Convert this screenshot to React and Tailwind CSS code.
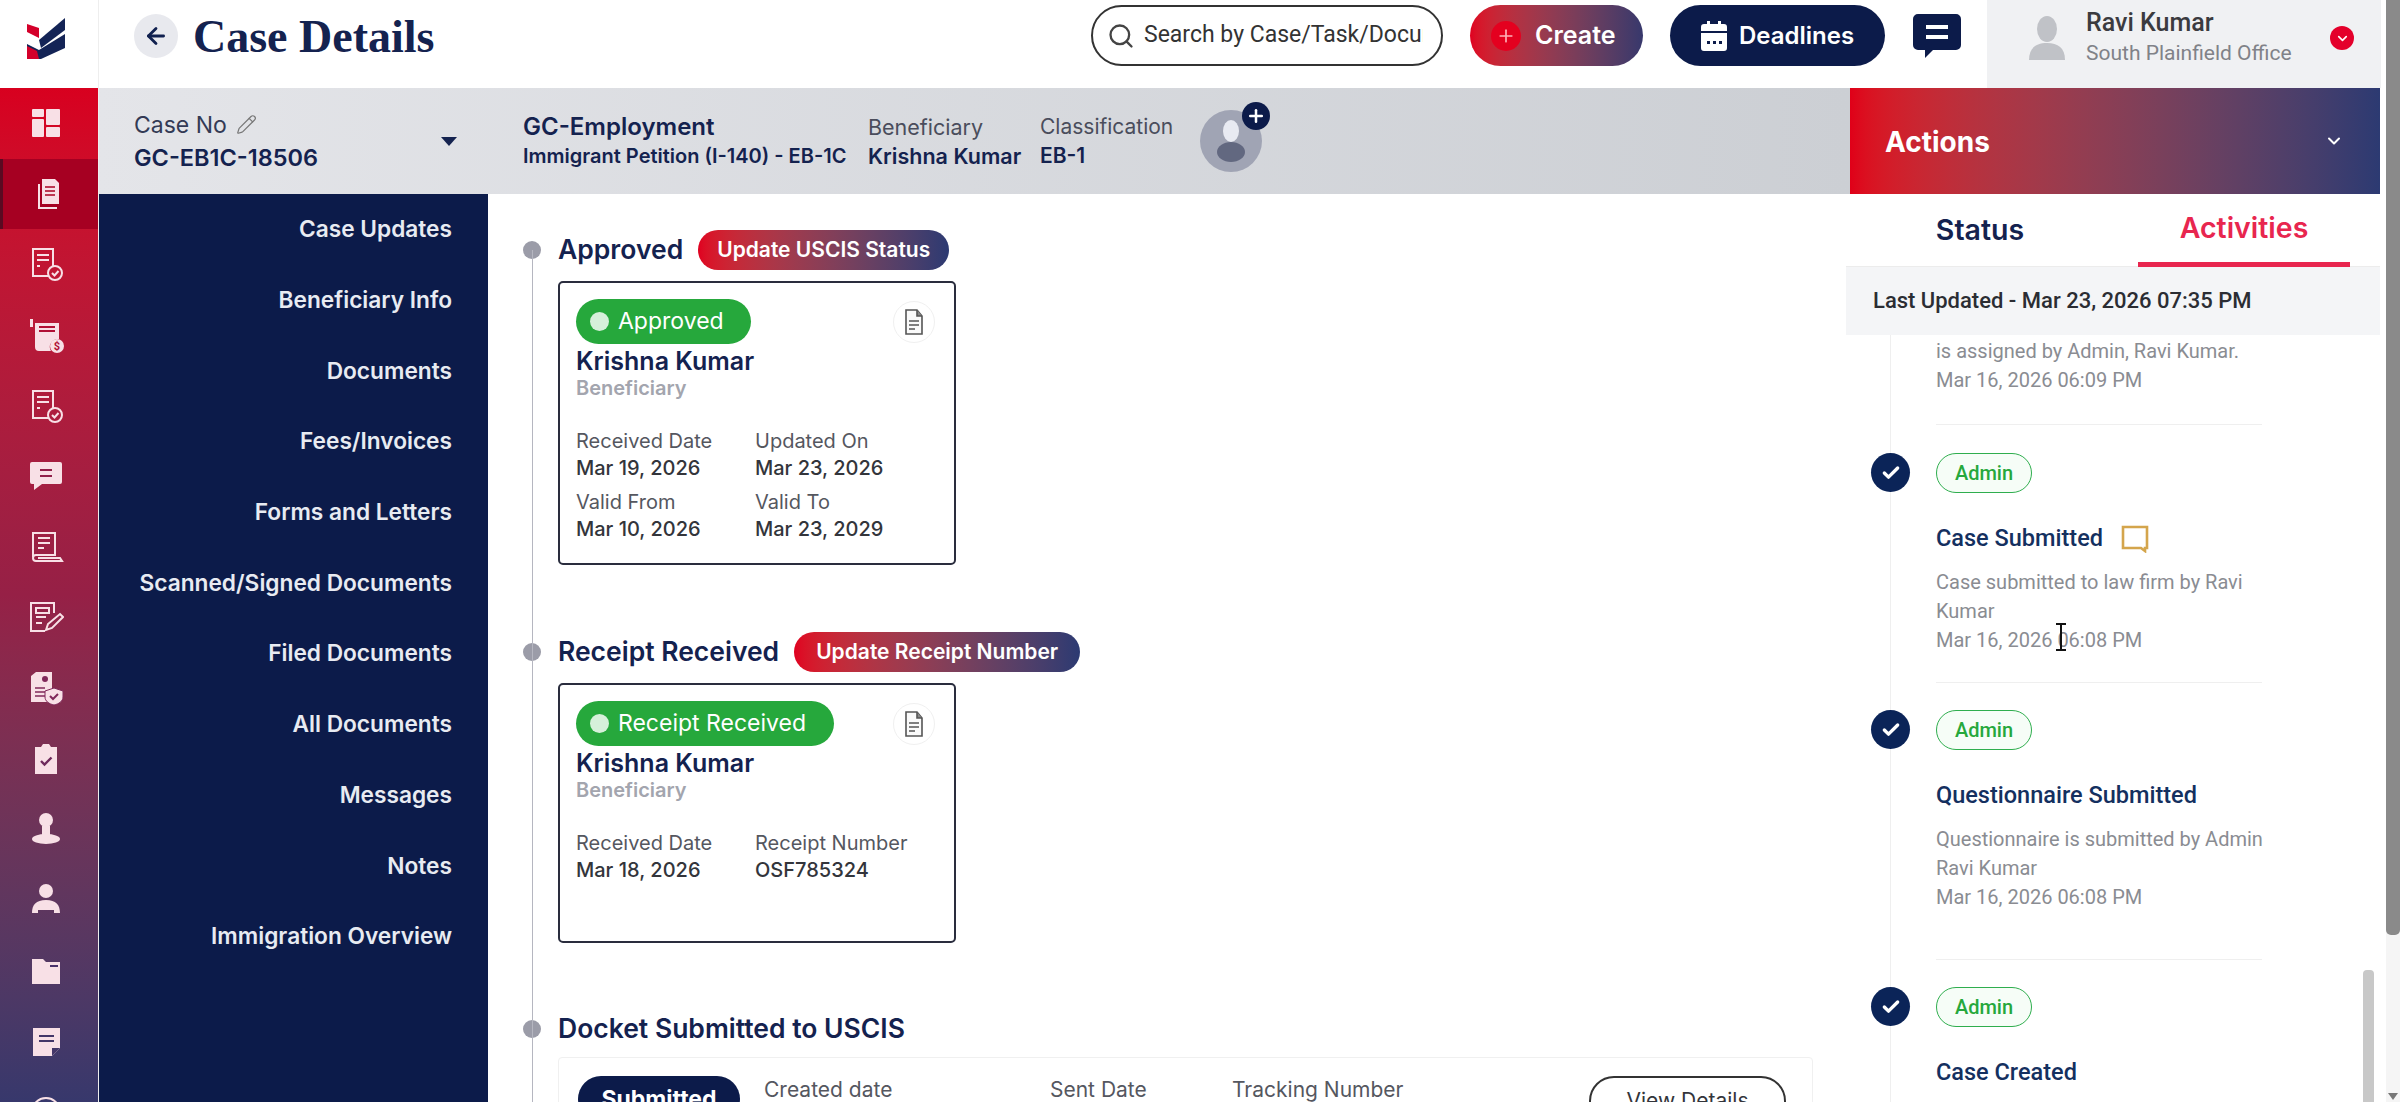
import { ArrowLeft, Search, Plus, ChevronDown, Check, Pencil } from 'lucide-react'

const subNav = ['Case Updates', 'Beneficiary Info', 'Documents', 'Fees/Invoices', 'Forms and Letters', 'Scanned/Signed Documents', 'Filed Documents', 'All Documents', 'Messages', 'Notes', 'Immigration Overview']

function Logo() {
  return (
    <svg width="40" height="42" viewBox="0 0 40 42">
      <path d="M0 14 L12 20 L12 10 L0 6Z" fill="#d4002a" />
      <path d="M12 22 L38 0 V12 L14 30Z" fill="#142456" />
      <path d="M0 26 L12 32 L38 16 V30 L14 41 H0Z" fill="#142456" />
      <path d="M0 28 L10 33 L12 41 H0Z" fill="#d4002a" />
    </svg>
  )
}

// rail glyphs, all on a 36 box
const glyphs = [
  <g fill="currentColor"><rect x="4" y="4" width="12" height="8" rx="1" /><rect x="4" y="14" width="12" height="18" rx="1" /><rect x="18" y="4" width="14" height="16" rx="1" /><rect x="18" y="22" width="14" height="10" rx="1" /></g>,
  <g><path d="M11 3h13l4 4v21H11z" fill="currentColor" /><path d="M8 8v24h18" fill="none" stroke="currentColor" strokeWidth="2" /><path d="M14 11h10M14 15h10M14 19h10" stroke="#a80022" strokeWidth="1.6" /></g>,
  <g fill="none" stroke="currentColor" strokeWidth="2"><path d="M21 30H5V3h20v17" /><path d="M9 9h12M9 14h12M9 20h3" /><circle cx="27" cy="27" r="7" /><path d="M24 27l2.5 2.5 4-4.5" /></g>,
  <g><path d="M7 6h24v16a8 8 0 0 0-8 12H11a4 4 0 0 1-4-4z" fill="currentColor" /><path d="M2 2h3v8H2z" fill="currentColor" /><path d="M11 10h16M11 14h16" stroke="#b01035" strokeWidth="2" /><circle cx="29" cy="29" r="7" fill="currentColor" /><text x="29" y="33" fontSize="11" fontWeight="700" textAnchor="middle" fill="#b01035" fontFamily="Roboto, sans-serif">$</text></g>,
  <g fill="none" stroke="currentColor" strokeWidth="2"><path d="M21 30H5V3h20v17" /><path d="M9 9h12M9 14h12M9 20h3" /><circle cx="27" cy="27" r="7" /><path d="M24 27l2.5 2.5 4-4.5" /></g>,
  <g><path d="M4 4h28a2 2 0 0 1 2 2v18a2 2 0 0 1-2 2H14l-8 6v-6H4a2 2 0 0 1-2-2V6a2 2 0 0 1 2-2z" fill="currentColor" /><path d="M12 12h12M12 18h12" stroke="#90204a" strokeWidth="2" /></g>,
  <g fill="none" stroke="currentColor" strokeWidth="2"><path d="M5 28V4h22v22H8a3 3 0 0 0-3 3 3 3 0 0 0 3 3h26l-2-3H10" /><path d="M10 9h12M10 14h12M10 19h6" /></g>,
  <g fill="none" stroke="currentColor" strokeWidth="2"><path d="M26 14V4H3v28h14" /><path d="M8 9h13v5H8zM8 18h10M8 24h6" /><path d="M18 31l2-6 12-10 3 3-11 11z" /></g>,
  <g><path d="M3 6l5-4h16v18a8 8 0 0 0-3 12H3z" fill="currentColor" /><path d="M7 18h10M7 22h10M7 26h10" stroke="#80285a" strokeWidth="1.6" /><circle cx="17" cy="9" r="3" fill="#80285a" /><path d="M26 18l9 3v6c0 4-4 7-9 8-5-1-9-4-9-8v-6z" fill="currentColor" stroke="#80285a" /><path d="M22 26l3 3 5-5" fill="none" stroke="#80285a" strokeWidth="2" /></g>,
  <g><path d="M7 6h6l2-3h6l2 3h6v27H7z" fill="currentColor" /><path d="M13 20l3.5 3.5 7-7" fill="none" stroke="#6e2a5c" strokeWidth="2.4" /></g>,
  <g fill="currentColor"><circle cx="18" cy="9" r="7" /><rect x="14" y="15" width="8" height="9" /><ellipse cx="18" cy="28" rx="14" ry="5" /></g>,
  <g fill="currentColor"><circle cx="18" cy="9" r="7" /><path d="M4 31c0-8 4-13 14-13s14 5 14 13h-6v-3h-16v3z" /></g>,
  <g><path d="M4 7h11l3 3h14v22H4z" fill="currentColor" /><path d="M22 14h8" stroke="#4a326a" strokeWidth="2" /></g>,
  <g><path d="M5 5h27v20l-8 8H5z" fill="currentColor" /><path d="M11 13h15M11 18h15" stroke="#443668" strokeWidth="2" /><path d="M24 33v-8h8" fill="#443668" /></g>,
  <g fill="none" stroke="currentColor" strokeWidth="2"><circle cx="18" cy="18" r="14" /></g>,
]

function Rail() {
  return (
    <aside className="w-[99px] shrink-0 flex flex-col border-r border-[#eeeeee]">
      <div className="h-[88px] shrink-0 bg-white flex items-center justify-center pb-[10px] pr-[5px]">
        <Logo />
      </div>
      <div className="flex-1 overflow-hidden bg-gradient-to-b from-[#d8001f] via-[#962046] via-50% to-[#37386c] flex flex-col">
        {glyphs.map((g, i) => (
          <div key={i} className={`h-[70.6px] shrink-0 flex items-center justify-center text-[#f8e0e6] ${i === 1 ? 'bg-[#a60022] border-l-[3px] border-[#5a0a22] pr-[3px]' : 'pr-[6px]'}`}>
            <svg width="36" height="36" viewBox="0 0 36 36">{g}</svg>
          </div>
        ))}
      </div>
    </aside>
  )
}

function Header() {
  return (
    <header className="h-[88px] shrink-0 flex items-start bg-white font-['Inter',sans-serif]">
      <button className="mt-[14px] ml-[35px] w-[44px] h-[44px] rounded-full bg-[#e8e9ee] flex items-center justify-center text-[#10204f]">
        <ArrowLeft size={26} strokeWidth={2.6} />
      </button>
      <h1 className="mt-[11px] ml-[15px] font-['Liberation_Serif',serif] font-bold text-[46px] leading-[52px] text-[#14224f]">Case Details</h1>
      <div className="flex-1" />
      <div className="mt-[5px] w-[352px] h-[61px] rounded-full border-2 border-[#333] flex items-center pl-[14px] pr-[18px] gap-[9px] font-['Roboto',sans-serif] text-[23px] text-[#333] overflow-hidden">
        <Search size={28} strokeWidth={2} className="shrink-0 text-[#444]" />
        <span className="whitespace-nowrap overflow-hidden">Search by Case/Task/Document</span>
      </div>
      <button className="mt-[5px] ml-[27px] w-[173px] h-[61px] rounded-full bg-gradient-to-r from-[#e00020] to-[#37386c] flex items-center pl-[21px] gap-[14px] text-white font-semibold text-[25px]">
        <span className="w-[30px] h-[30px] rounded-full bg-[#e4001f] flex items-center justify-center">
          <Plus size={20} strokeWidth={2} className="text-[#ffb0b8]" />
        </span>
        Create
      </button>
      <button className="mt-[5px] ml-[27px] w-[215px] h-[61px] rounded-full bg-[#0c1b4a] flex items-center justify-center gap-[12px] text-white font-semibold text-[24px]">
        <svg width="26" height="30" viewBox="0 0 26 30" fill="#fff">
          <path d="M6 0h3v4H6zM17 0h3v4h-3z" />
          <path d="M3 3h20a3 3 0 0 1 3 3v4H0V6a3 3 0 0 1 3-3zM0 12h26v15a3 3 0 0 1-3 3H3a3 3 0 0 1-3-3z" />
          <path d="M6 20h3v3H6zM12 20h3v3h-3zM18 20h3v3h-3z" fill="#0c1b4a" />
        </svg>
        Deadlines
      </button>
      <svg className="mt-[14px] ml-[28px]" width="48" height="44" viewBox="0 0 48 44">
        <path d="M5 0h38a5 5 0 0 1 5 5v26a5 5 0 0 1-5 5H20l-8 8v-8H5a5 5 0 0 1-5-5V5a5 5 0 0 1 5-5z" fill="#0c1b4a" />
        <path d="M13 13h22M13 23h22" stroke="#fff" strokeWidth="4" />
      </svg>
      <div className="ml-[26px] w-[394px] h-[88px] bg-[#f0f1f3] flex items-center pb-[12px] font-['Roboto',sans-serif]">
        <svg className="ml-[40px]" width="40" height="44" viewBox="0 0 40 44" fill="#c0c2c7">
          <ellipse cx="20" cy="13" rx="10" ry="13" />
          <path d="M2 44c0-12 7-17 18-17s18 5 18 17z" />
        </svg>
        <div className="ml-[19px] flex flex-col">
          <span className="text-[25px] leading-[30px] font-medium text-[#3b3b3f]">Ravi Kumar</span>
          <span className="text-[21px] leading-[30px] text-[#808288]">South Plainfield Office</span>
        </div>
        <span className="ml-auto mr-[27px] w-[24px] h-[24px] rounded-full bg-[#e4002b] flex items-center justify-center text-white">
          <ChevronDown size={15} strokeWidth={2.6} />
        </span>
      </div>
      <div className="w-[19px]" />
    </header>
  )
}

function CaseBand() {
  return (
    <div className="h-[106px] shrink-0 flex font-['Inter',sans-serif]">
      <div className="flex-1 bg-gradient-to-r from-[#e4e5e9] to-[#cccfd4] flex items-center text-[#14224f]">
        <div className="ml-[35px] w-[389px] flex items-center">
          <div className="flex-1">
            <div className="flex items-center gap-[9px] text-[23px] leading-[30px] text-[#333a55]">
              Case No <Pencil size={21} strokeWidth={1.4} className="text-[#777]" />
            </div>
            <div className="mt-[3px] text-[23.5px] leading-[30px] font-semibold">GC-EB1C-18506</div>
          </div>
          <div className="w-0 h-0 border-x-[8px] border-x-transparent border-t-[9px] border-t-[#14224f] mr-[66px]" />
        </div>
        <div className="w-[345px]">
          <div className="text-[24px] leading-[30px] font-semibold">GC-Employment</div>
          <div className="text-[20px] leading-[28px] font-semibold whitespace-nowrap">Immigrant Petition (I-140) - EB-1C</div>
        </div>
        <div className="w-[172px]">
          <div className="text-[21.5px] leading-[30px] text-[#4a4d5c]">Beneficiary</div>
          <div className="text-[21.5px] leading-[28px] font-semibold whitespace-nowrap">Krishna Kumar</div>
        </div>
        <div className="w-[157px]">
          <div className="text-[21px] leading-[30px] text-[#4a4d5c]">Classification</div>
          <div className="text-[21px] leading-[28px] font-semibold">EB-1</div>
        </div>
        <div className="relative ml-[3px] w-[62px] h-[62px] rounded-full bg-[#a0a4b4] flex items-center justify-center">
          <svg width="30" height="42" viewBox="0 0 30 42">
            <ellipse cx="15" cy="11" rx="8" ry="11" fill="#e8eaf2" />
            <ellipse cx="15" cy="32" rx="14" ry="10" fill="#626880" />
          </svg>
          <span className="absolute top-[-8px] right-[-8px] w-[28px] h-[28px] rounded-full bg-[#0c1b4a] flex items-center justify-center text-white">
            <Plus size={20} strokeWidth={3} />
          </span>
        </div>
      </div>
      <div className="w-[530px] bg-gradient-to-r from-[#e00018] to-[#2c3a72] flex items-center pl-[35px] pr-[36px] text-white">
        <span className="font-bold text-[28px] mt-[2px]">Actions</span>
        <ChevronDown size={20} strokeWidth={2.4} className="ml-auto" />
      </div>
      <div className="w-[20px] bg-white" />
    </div>
  )
}

function SubNav() {
  return (
    <nav className="w-[389px] shrink-0 bg-[#0c1b4a] flex flex-col font-['Inter',sans-serif]">
      {subNav.map((item) => (
        <div key={item} className="h-[70.7px] shrink-0 flex items-center justify-end pr-[36px] text-[22.7px] font-semibold text-[#e8ebf2] whitespace-nowrap">
          {item}
        </div>
      ))}
    </nav>
  )
}

function Field({ label, value }) {
  return (
    <div className="w-[179px]">
      <div className="text-[20px] leading-[27px] text-[#55575f] whitespace-nowrap">{label}</div>
      <div className="text-[20px] leading-[27px] font-medium text-[#33353b] whitespace-nowrap">{value}</div>
    </div>
  )
}

function StatusCard({ status, pillWidth, height, rows }) {
  return (
    <div className={`ml-[35px] w-[398px] ${height} border-2 border-[#2a2d3e] rounded-[5px] mt-[11px] px-[16px] pt-[16px]`}>
      <div className="flex items-center justify-between">
        <div className={`${pillWidth} h-[45px] rounded-full bg-[#26a83c] flex items-center pl-[14px] gap-[9px] text-white text-[23px] whitespace-nowrap`}>
          <span className="w-[19px] h-[19px] rounded-full bg-[#d6f0da]" />
          {status}
        </div>
        <div className="mr-[3px] w-[42px] h-[42px] rounded-full border border-[#f0f0f0] flex items-center justify-center">
          <svg width="20" height="26" viewBox="0 0 20 26" fill="none" stroke="#555" strokeWidth="1.6">
            <path d="M2 1h11l5 6v18H2z" fill="#fafafa" />
            <path d="M13 1v6h5" fill="#888" />
            <path d="M5 12h10M5 16h10M5 20h6" />
          </svg>
        </div>
      </div>
      <div className="mt-[1px] text-[25px] leading-[32px] font-semibold text-[#14224f] whitespace-nowrap">Krishna Kumar</div>
      <div className="text-[20px] leading-[22px] font-semibold text-[#a3a5ae]">Beneficiary</div>
      <div className="mt-[29px] flex flex-col gap-[7px]">
        {rows.map((row) => (
          <div key={row[0].label} className="flex">
            <Field {...row[0]} />
            <Field {...row[1]} />
          </div>
        ))}
      </div>
    </div>
  )
}

function StepHead({ title, action, actionWidth }) {
  return (
    <div className="flex items-center h-[40px]">
      <span className="w-[18px] h-[18px] rounded-full bg-[#9b9ca8] mr-[17px] shrink-0" />
      <h2 className="text-[26.5px] font-semibold text-[#14224f] whitespace-nowrap">{title}</h2>
      {action && (
        <button className={`ml-[15px] ${actionWidth} h-[40px] rounded-full bg-gradient-to-r from-[#e00020] to-[#2c3a72] text-white font-semibold text-[21px] whitespace-nowrap`}>
          {action}
        </button>
      )}
    </div>
  )
}

function Content() {
  return (
    <main className="relative flex-1 min-w-0 bg-white overflow-hidden font-['Inter',sans-serif] pl-[35px] pt-[36px]">
      <div className="absolute left-[44px] top-[56px] bottom-0 w-px bg-[#b5b6c0]" />
      <StepHead title="Approved" action="Update USCIS Status" actionWidth="w-[251px]" />
      <StatusCard
        status="Approved"
        pillWidth="w-[175px]"
        height="h-[284px]"
        rows={[
          [{ label: 'Received Date', value: 'Mar 19, 2026' }, { label: 'Updated On', value: 'Mar 23, 2026' }],
          [{ label: 'Valid From', value: 'Mar 10, 2026' }, { label: 'Valid To', value: 'Mar 23, 2029' }],
        ]}
      />
      <div className="h-[67px]" />
      <StepHead title="Receipt Received" action="Update Receipt Number" actionWidth="w-[286px]" />
      <StatusCard
        status="Receipt Received"
        pillWidth="w-[258px]"
        height="h-[260px]"
        rows={[[{ label: 'Received Date', value: 'Mar 18, 2026' }, { label: 'Receipt Number', value: 'OSF785324' }]]}
      />
      <div className="h-[66px]" />
      <StepHead title="Docket Submitted to USCIS" />
      <div className="ml-[35px] mt-[8px] w-[1255px] h-[120px] border border-[#f0f0f0] rounded-[4px] flex items-start pl-[19px] pr-[26px] pt-[18px]">
        <div className="w-[162px] h-[46px] rounded-full bg-[#0c1b4a] text-white font-bold text-[23px] flex items-center justify-center">Submitted</div>
        <div className="ml-[24px] w-[286px] text-[21px] leading-[27px] text-[#55575f]">Created date</div>
        <div className="w-[182px] text-[21px] leading-[27px] text-[#55575f]">Sent Date</div>
        <div className="text-[21px] leading-[27px] text-[#55575f]">Tracking Number</div>
        <div className="ml-auto w-[197px] h-[50px] rounded-full border-2 border-[#333] text-[21px] text-[#33353b] flex items-center justify-center">View Details</div>
      </div>
    </main>
  )
}

function Activity({ title, comment, lines, date, last, tail = 'mt-[27px]' }) {
  return (
    <div className="relative">
      <span className="absolute left-[25px] top-[0px] w-[39px] h-[39px] rounded-full bg-[#0b2458] flex items-center justify-center text-white">
        <Check size={20} strokeWidth={4} />
      </span>
      <div className="ml-[90px] w-[326px]">
        <div className="w-[96px] h-[40px] rounded-full border-[1.5px] border-[#2fae4e] bg-[#f6fdf7] flex items-center justify-center text-[20px] font-medium text-[#26a83c]">Admin</div>
        <div className="mt-[26px] flex items-center gap-[18px] h-[40px] text-[23.5px] font-medium text-[#14305f] whitespace-nowrap">
          {title}
          {comment && (
            <svg width="28" height="28" viewBox="0 0 28 28" fill="none" stroke="#d4a54c" strokeWidth="2.6">
              <path d="M2 2h24v21h-2v3l-4-3H2z" />
            </svg>
          )}
        </div>
        {!last && (
          <>
            <div className="mt-[9px] text-[20px] leading-[29px] text-[#8a8c92]">
              {lines.map((l) => <div key={l} className="whitespace-nowrap">{l}</div>)}
            </div>
            <div className="text-[20px] leading-[29px] text-[#8a8c92]">{date}</div>
            <div className={`${tail} mb-[27px] h-px bg-[#efefef]`} />
          </>
        )}
      </div>
    </div>
  )
}

function ActivityPanel() {
  return (
    <section className="relative w-[534px] shrink-0 bg-white flex flex-col font-['Roboto',sans-serif] overflow-hidden">
      <div className="h-[73px] shrink-0 flex items-start border-b border-[#ececec]">
        <div className="w-[268px] h-[73px] flex items-center justify-center text-[28.5px] font-semibold text-[#14224f] font-['Inter',sans-serif]">Status</div>
        <div className="ml-[24px] w-[212px] h-[73px] pt-[1px] border-b-[5px] border-[#e8264f] flex items-center justify-center text-[28.5px] font-semibold text-[#e8264f] font-['Inter',sans-serif]">Activities</div>
      </div>
      <div className="h-[68px] shrink-0 bg-[#f4f5f7] flex items-center pl-[27px] pb-[2px] text-[22px] font-medium text-[#2b2d33]">
        Last Updated - Mar 23, 2026 07:35 PM
      </div>
      <div className="relative flex-1 overflow-hidden">
        <div className="absolute left-[44px] top-0 bottom-0 w-px bg-[#efefef]" />
        <div className="relative pt-[2px]">
          <div className="ml-[90px] w-[326px] text-[20px] leading-[29px] text-[#8a8c92]">
            <div className="whitespace-nowrap">is assigned by Admin, Ravi Kumar.</div>
            <div>Mar 16, 2026 06:09 PM</div>
            <div className="mt-[29px] mb-[28px] h-px bg-[#efefef]" />
          </div>
          <Activity title="Case Submitted" comment lines={['Case submitted to law firm by Ravi', 'Kumar']} date="Mar 16, 2026 06:08 PM" />
          <Activity title="Questionnaire Submitted" tail="mt-[47px]" lines={['Questionnaire is submitted by Admin', 'Ravi Kumar']} date="Mar 16, 2026 06:08 PM" />
          <Activity title="Case Created" last />
        </div>
        <div className="absolute right-[6px] top-[635px] bottom-0 w-[11px] rounded-t-[4px] bg-[#c8c8c8]" />
      </div>
    </section>
  )
}

export default function App() {
  return (
    <div className="relative h-screen w-full overflow-hidden bg-white flex">
      <Rail />
      <div className="flex-1 min-w-0 flex flex-col">
        <Header />
        <CaseBand />
        <div className="flex-1 min-h-0 flex">
          <SubNav />
          <Content />
          <ActivityPanel />
          <div className="w-[20px] shrink-0 bg-white" />
        </div>
      </div>
      {/* page scrollbar */}
      <div className="absolute right-0 top-0 bottom-0 w-[14px] bg-[#f5f5f5]">
        <div className="h-[935px] rounded-b-[5px] bg-[#8a8a8a]" />
        <div className="absolute bottom-[2px] left-[2px] w-0 h-0 border-x-[5px] border-x-transparent border-t-[7px] border-t-[#777]" />
      </div>
      {/* text cursor caught in the capture */}
      <svg className="absolute left-[2055px] top-[623px]" width="12" height="28" viewBox="0 0 12 28" fill="none" stroke="#111" strokeWidth="2">
        <path d="M1 1h10M1 27h10M6 1v26" />
      </svg>
    </div>
  )
}
